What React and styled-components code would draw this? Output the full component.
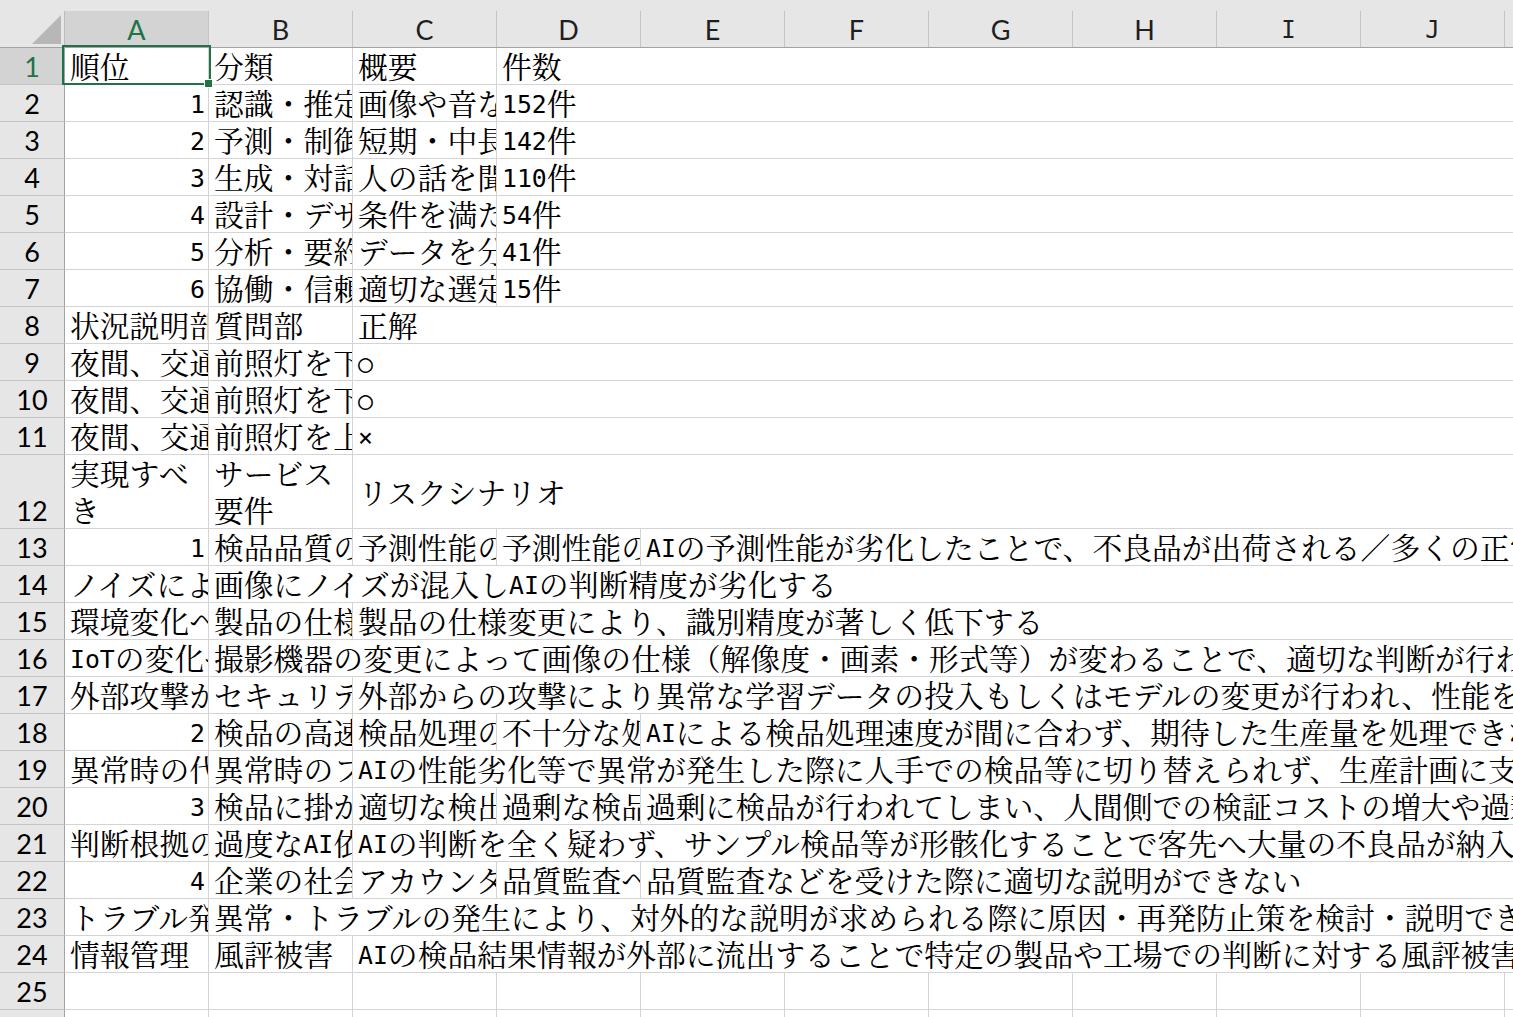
import React from 'react';
import styled, { createGlobalStyle } from 'styled-components';

const COLS = ['A', 'B', 'C', 'D', 'E', 'F', 'G', 'H', 'I', 'J', 'K'];
const ROWHEAD = 65;
const COLW = 144;
const GRID = `${ROWHEAD}px repeat(${COLS.length}, ${COLW}px)`;

const Global = createGlobalStyle`
  *, *::before, *::after { box-sizing: border-box; }
  html, body { margin: 0; padding: 0; background: #fff; overflow: hidden; }
  body { width: 1513px; height: 1017px; }
`;

const Sheet = styled.div`
  position: relative;
  width: 1513px;
  height: 1017px;
  overflow: hidden;
  background: #fff;
`;

const HeaderBar = styled.div`
  display: grid;
  grid-template-columns: ${GRID};
  height: 48px;
  padding-top: 11px;
  background: #e6e6e6;
  border-bottom: 1px solid #a3a3a3;
`;

const Corner = styled.div`
  position: relative;
  border-right: 1px solid #bdbdbd;
  display: flex;
  align-items: flex-end;
  justify-content: flex-end;
  padding: 0 3px 3px 0;
`;

const ColHead = styled.div`
  border-right: 1px solid #c4c4c4;
  background: ${(p) => (p.$sel ? '#d3d3d3' : '#e6e6e6')};
  color: ${(p) => (p.$sel ? '#217346' : '#1f1f1f')};
  font-family: ${(p) => (p.$mono ? '"DejaVu Sans Mono", monospace' : 'Lato, "Open Sans", sans-serif')};
  font-size: ${(p) => (p.$mono ? '24px' : '27px')};
  line-height: 38px;
  text-align: center;
  overflow: hidden;
`;

const Row = styled.div`
  display: grid;
  grid-template-columns: ${GRID};
  height: ${(p) => p.$h}px;
`;

const RowHead = styled.div`
  display: flex;
  align-items: flex-end;
  justify-content: center;
  background: ${(p) => (p.$sel ? '#d3d3d3' : '#e6e6e6')};
  color: ${(p) => (p.$sel ? '#217346' : '#000')};
  border-right: 1px solid #a3a3a3;
  border-bottom: 1px solid #c4c4c4;
  font-family: Lato, "Open Sans", sans-serif;
  font-size: 27px;
  line-height: 34px;
`;

const Cell = styled.div`
  grid-column: span ${(p) => p.$span};
  overflow: hidden;
  border-right: 1px solid #d4d4d4;
  border-bottom: 1px solid #d4d4d4;
  white-space: ${(p) => (p.$wrap ? 'normal' : 'nowrap')};
  text-align: ${(p) => (p.$right ? 'right' : 'left')};
  padding: ${(p) => (p.$right ? '0 3px 0 0' : '0 0 0 5px')};
  font-family: "Noto Serif CJK JP", "Noto Sans CJK JP", sans-serif;
  font-size: 29.8px;
  line-height: ${(p) => p.$lh}px;
  color: #000;
`;

const Latin = styled.span`
  font-family: "DejaVu Sans Mono", monospace;
  font-size: 24.8px;
  line-height: 0;
  position: relative;
  top: -2px;
`;

const Selection = styled.div`
  position: absolute;
  left: 62px;
  top: 45px;
  width: 149px;
  height: 40px;
  border: 2px solid #217346;
  pointer-events: none;
`;

const FillHandle = styled.div`
  position: absolute;
  left: 204px;
  top: 79px;
  width: 9px;
  height: 9px;
  background: #217346;
  border: 1px solid #fff;
  pointer-events: none;
`;

function rich(s) {
  return String(s)
    .split(/([A-Za-z0-9○×]+)/)
    .map((part, i) => (i % 2 ? <Latin key={i}>{part}</Latin> : part));
}

const ROWS = [
  { v: ['順位', '分類', '概要', '件数'] },
  { v: [1, '認識・推定', '画像や音などのデータから対象を認識・推定する', '152件'] },
  { v: [2, '予測・制御', '短期・中長期の予測に基づき制御を行う', '142件'] },
  { v: [3, '生成・対話', '人の話を聞き取り、応答を生成する', '110件'] },
  { v: [4, '設計・デザイン', '条件を満たす設計案を作成する', '54件'] },
  { v: [5, '分析・要約', 'データを分析し要約する', '41件'] },
  { v: [6, '協働・信頼', '適切な選定と人との協働を行う', '15件'] },
  { v: ['状況説明部', '質問部', '正解'] },
  { v: ['夜間、交通量の少ない道路を走行している', '前照灯を下向きにすべきか', '○'] },
  { v: ['夜間、交通量の少ない道路を走行している', '前照灯を下向きにすべきか', '○'] },
  { v: ['夜間、交通量の少ない道路を走行している', '前照灯を上向きにすべきか', '×'] },
  { v: ['実現すべき', 'サービス要件', 'リスクシナリオ'], h: 74, wrap: [true, true, false] },
  { v: [1, '検品品質の維持', '予測性能の劣化', '予測性能の劣化による不良品の流出', 'AIの予測性能が劣化したことで、不良品が出荷される／多くの正常品が不良品と判定される'] },
  { v: ['ノイズによる性能劣化', '画像にノイズが混入しAIの判断精度が劣化する'] },
  { v: ['環境変化への対応', '製品の仕様変更', '製品の仕様変更により、識別精度が著しく低下する'] },
  { v: ['IoTの変化への対応', '撮影機器の変更によって画像の仕様（解像度・画素・形式等）が変わることで、適切な判断が行われなくなる'] },
  { v: ['外部攻撃からの防御', 'セキュリティ対策', '外部からの攻撃により異常な学習データの投入もしくはモデルの変更が行われ、性能を低下させられる'] },
  { v: [2, '検品の高速化', '検品処理の遅延', '不十分な処理速度', 'AIによる検品処理速度が間に合わず、期待した生産量を処理できない'] },
  { v: ['異常時の代替手段', '異常時のフォールバック', 'AIの性能劣化等で異常が発生した際に人手での検品等に切り替えられず、生産計画に支障が出る'] },
  { v: [3, '検品に掛かるコストの削減', '適切な検出基準', '過剰な検品', '過剰に検品が行われてしまい、人間側での検証コストの増大や過剰な廃棄が発生する'] },
  { v: ['判断根拠の把握', '過度なAI依存', 'AIの判断を全く疑わず、サンプル検品等が形骸化することで客先へ大量の不良品が納入される'] },
  { v: [4, '企業の社会的責任', 'アカウンタビリティ', '品質監査への対応', '品質監査などを受けた際に適切な説明ができない'] },
  { v: ['トラブル発生時の説明', '異常・トラブルの発生により、対外的な説明が求められる際に原因・再発防止策を検討・説明できない'] },
  { v: ['情報管理', '風評被害', 'AIの検品結果情報が外部に流出することで特定の製品や工場での判断に対する風評被害が発生する'] },
  { v: [] },
  { v: [] },
];

function buildCells(row) {
  const vals = COLS.map((_, i) => (row.v[i] === undefined ? null : row.v[i]));
  const h = row.h || 37;
  const cells = [];
  let i = 0;
  while (i < vals.length) {
    const val = vals[i];
    const wrap = row.wrap ? row.wrap[i] : false;
    if (val === null) {
      cells.push({ key: i, span: 1, val: null, lh: h - 1 });
      i += 1;
    } else if (typeof val === 'number') {
      cells.push({ key: i, span: 1, val, right: true, lh: h - 1 });
      i += 1;
    } else if (wrap) {
      cells.push({ key: i, span: 1, val, wrap: true, lh: (h - 1) / 2 });
      i += 1;
    } else {
      let j = i + 1;
      while (j < vals.length && vals[j] === null) j += 1;
      cells.push({ key: i, span: j - i, val, lh: h - 1 });
      i = j;
    }
  }
  return { h, cells };
}

function CornerMark() {
  return (
    <svg width="29" height="29" viewBox="0 0 29 29">
      <polygon points="29,0 29,29 0,29" fill="#b7b7b7" />
    </svg>
  );
}

export default function App() {
  return (
    <>
      <Global />
      <Sheet>
        <HeaderBar>
          <Corner>
            <CornerMark />
          </Corner>
          {COLS.map((c) => (
            <ColHead key={c} $sel={c === 'A'} $mono={c === 'I' || c === 'J'}>
              {c}
            </ColHead>
          ))}
        </HeaderBar>
        {ROWS.map((row, r) => {
          const { h, cells } = buildCells(row);
          return (
            <Row key={r} $h={h}>
              <RowHead $sel={r === 0}>{r + 1}</RowHead>
              {cells.map((c) => (
                <Cell key={c.key} $span={c.span} $right={c.right} $wrap={c.wrap} $lh={c.lh}>
                  {c.val === null ? null : rich(c.val)}
                </Cell>
              ))}
            </Row>
          );
        })}
        <Selection />
        <FillHandle />
      </Sheet>
    </>
  );
}
